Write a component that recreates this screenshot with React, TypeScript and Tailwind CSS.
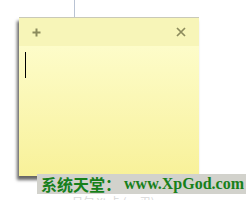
import React from "react";

export default function App() {
  return (
    <div className="relative w-[246px] h-[200px] bg-white overflow-hidden">
      <div className="ml-[74px] w-px h-[17px] bg-[#b9c3d3]" />
      <div className="ml-[19px] w-[180px] h-[159px] flex flex-col border-t border-[#c9c9b8] shadow-[-2px_4px_3px_rgba(0,0,0,0.6)]">
        <div className="h-[28px] bg-[#f7f5b8] flex items-center justify-between px-[13px]">
          <svg width="9" height="9" viewBox="0 0 9 9">
            <path d="M4.5 0.5v8M0.5 4.5h8" stroke="#8c8b5c" strokeWidth="2" />
          </svg>
          <svg width="10" height="10" viewBox="0 0 10 10">
            <path d="M1 1l8 8M9 1l-8 8" stroke="#8c8b5c" strokeWidth="1.7" />
          </svg>
        </div>
        <div className="flex-1 bg-gradient-to-b from-[#fdfcc9] to-[#f8f199] pl-[6px] pt-[6px]">
          <div className="w-px h-[26px] bg-black" />
        </div>
      </div>
      <div className="absolute left-[37px] top-[174px] w-[209px] h-[20px] bg-[#d2d2cc] flex items-center pl-[4px] font-bold text-[#17801a] text-[16px] leading-none whitespace-nowrap">
        <span style={{ fontFamily: '"Noto Sans CJK SC", sans-serif' }}>系统天堂：</span>
        <span className="ml-[3px]" style={{ fontFamily: '"Liberation Serif", serif' }}>www.XpGod.com</span>
      </div>
      <div className="absolute left-[72px] top-[196px] text-[11px] leading-none text-[#d8d8d8] whitespace-nowrap" style={{ fontFamily: '"Noto Sans CJK SC", sans-serif' }}>
        日勺 Xt 卡 (xx 刃)
      </div>
    </div>
  );
}
